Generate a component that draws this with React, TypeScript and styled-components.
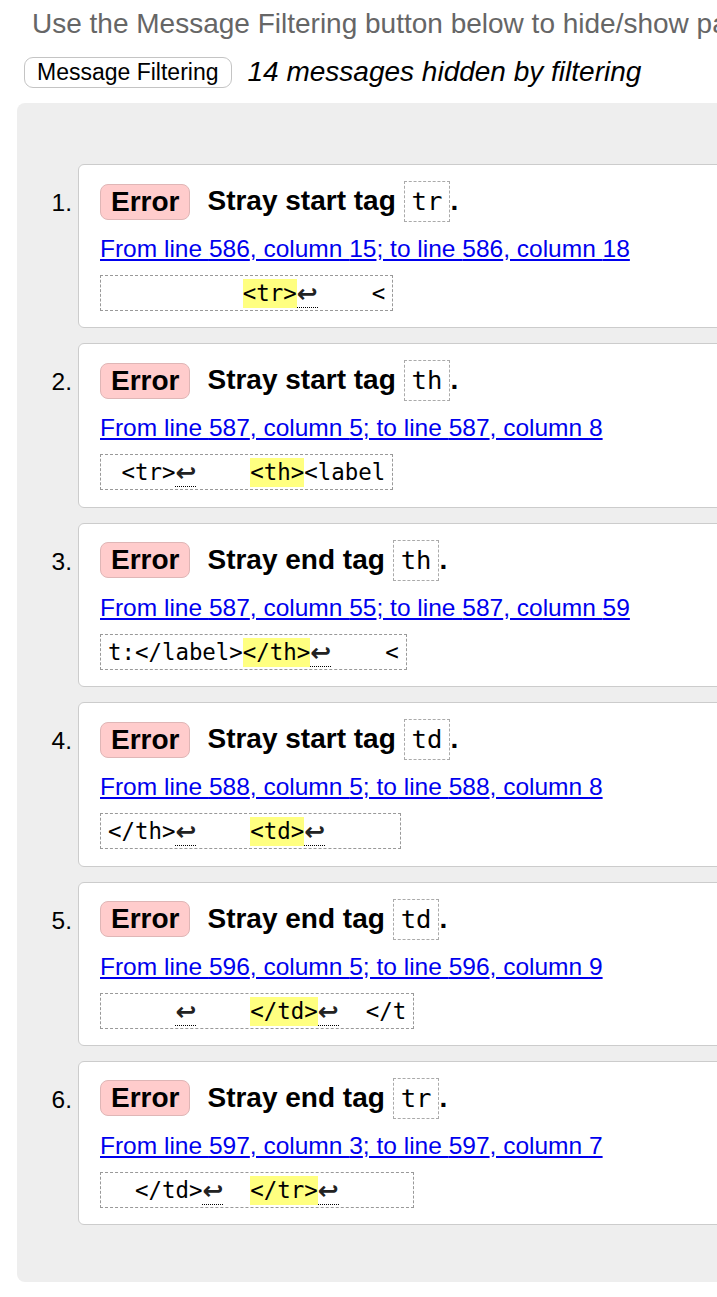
import React from 'react'
import styled, { createGlobalStyle } from 'styled-components'

const GlobalStyle = createGlobalStyle`
  html, body {
    margin: 0;
    padding: 0;
    background: #fff;
    overflow: hidden;
  }
  body {
    font-family: "Liberation Sans", Arial, sans-serif;
    color: #000;
  }
`

const Page = styled.div`
  width: 1000px;
  padding-bottom: 16px;
`

const Intro = styled.p`
  margin: 8px 0 0 32px;
  font-size: 28px;
  line-height: 32px;
  color: #666;
  white-space: nowrap;
`

const FilterRow = styled.div`
  display: flex;
  align-items: center;
  gap: 16px;
  margin: 16px 0 0 24px;
`

const FilterButton = styled.button`
  font-family: inherit;
  font-size: 23px;
  line-height: 29px;
  padding: 0 12px;
  border: 1px solid #c4c4c4;
  border-radius: 9px;
  background: #fff;
  color: #000;
`

const HiddenNote = styled.span`
  font-size: 28px;
  font-style: italic;
`

const Panel = styled.div`
  margin: 15px 0 0 17px;
  padding: 61px 0 57px;
  background: #eee;
  border-radius: 8px;
`

const MessageList = styled.ol`
  list-style: none;
  margin: 0;
  padding: 0;
  display: flex;
  flex-direction: column;
  gap: 15px;
`

const Item = styled.li`
  display: grid;
  grid-template-columns: 61px 1fr;
`

const Number = styled.span`
  text-align: right;
  padding: 18px 6px 0 0;
  font-size: 24.5px;
  line-height: 41px;
`

const Card = styled.div`
  background: #fff;
  border: 1px solid #ccc;
  border-radius: 6px;
  padding: 16px 21px 16.4px;
`

const Header = styled.div`
  display: flex;
  align-items: center;
  gap: 17px;
`

const Badge = styled.span`
  display: inline-block;
  box-sizing: border-box;
  height: 36px;
  line-height: 34px;
  padding: 0 10px;
  border: 1px solid #dfb6b6;
  border-radius: 8px;
  background: #fcc;
  font-size: 28px;
  font-weight: bold;
`

const Title = styled.span`
  font-size: 28px;
  font-weight: bold;
`

const TagCode = styled.code`
  display: inline-block;
  padding: 0 7px;
  border: 1px dashed #aaa;
  font-family: "DejaVu Sans Mono", monospace;
  font-size: 25.6px;
  font-weight: normal;
  line-height: 39px;
`

const Location = styled.a`
  display: block;
  width: fit-content;
  margin-top: 12px;
  font-size: 24.5px;
  line-height: 30px;
  color: #00e;
  text-decoration: underline;
`

const Extract = styled.code`
  display: block;
  width: fit-content;
  margin-top: 11px;
  padding: 3px 7px 2px;
  border: 1px dashed #999;
  font-family: "DejaVu Sans Mono", monospace;
  font-size: 22.4px;
  line-height: 29px;
  white-space: pre;
  color: #000;
`

const Mark = styled.mark`
  display: inline-block;
  background: #ffff80;
  color: inherit;
`

const LineBreak = styled.span`
  display: inline-block;
  vertical-align: top;
  width: 21px;
  height: 29px;
  line-height: 29px;
  text-align: center;
  font-family: "DejaVu Sans", sans-serif;
  font-size: 25px;
  font-weight: bold;
  color: #222;
  background: linear-gradient(to right, #000 50%, transparent 0) left bottom / 2px 1px repeat-x;
`

type Message = {
  kind: 'start' | 'end'
  tag: string
  from: [number, number]
  to: [number, number]
  extract: string
}

const MESSAGES: Message[] = [
  { kind: 'start', tag: 'tr', from: [586, 15], to: [586, 18], extract: '          [<tr>]~    <' },
  { kind: 'start', tag: 'th', from: [587, 5], to: [587, 8], extract: ' <tr>~    [<th>]<label' },
  { kind: 'end', tag: 'th', from: [587, 55], to: [587, 59], extract: 't:</label>[</th>]~    <' },
  { kind: 'start', tag: 'td', from: [588, 5], to: [588, 8], extract: '</th>~    [<td>]~     ' },
  { kind: 'end', tag: 'td', from: [596, 5], to: [596, 9], extract: '     ~    [</td>]~  </t' },
  { kind: 'end', tag: 'tr', from: [597, 3], to: [597, 7], extract: '  </td>~  [</tr>]~     ' }
]

// '[...]' is the highlighted part, '~' a line break
const renderExtract = (src: string) => {
  const parts: React.ReactNode[] = []
  let buf = ''
  let inMark = false
  let markBuf = ''
  const flush = () => {
    if (buf) parts.push(buf)
    buf = ''
  }
  for (const ch of src) {
    if (ch === '[') {
      flush()
      inMark = true
    } else if (ch === ']') {
      parts.push(<Mark key={parts.length}>{markBuf}</Mark>)
      markBuf = ''
      inMark = false
    } else if (ch === '~') {
      flush()
      parts.push(<LineBreak key={parts.length} title="U+000A">↩</LineBreak>)
    } else if (inMark) {
      markBuf += ch
    } else {
      buf += ch
    }
  }
  flush()
  return parts
}

const MessageItem: React.FC<{ msg: Message; index: number }> = ({ msg, index }) => (
  <Item>
    <Number>{index + 1}.</Number>
    <Card>
      <Header>
        <Badge>Error</Badge>
        <Title>
          Stray {msg.kind} tag <TagCode>{msg.tag}</TagCode>.
        </Title>
      </Header>
      <Location href="#">
        From line {msg.from[0]}, column {msg.from[1]}; to line {msg.to[0]}, column {msg.to[1]}
      </Location>
      <Extract>{renderExtract(msg.extract)}</Extract>
    </Card>
  </Item>
)

const App: React.FC = () => (
  <Page>
    <GlobalStyle />
    <Intro>Use the Message Filtering button below to hide/show particular messages, and to see total counts of errors and warnings.</Intro>
    <FilterRow>
      <FilterButton>Message Filtering</FilterButton>
      <HiddenNote>14 messages hidden by filtering</HiddenNote>
    </FilterRow>
    <Panel>
      <MessageList>
        {MESSAGES.map((msg, i) => (
          <MessageItem key={i} msg={msg} index={i} />
        ))}
      </MessageList>
    </Panel>
  </Page>
)

export default App
